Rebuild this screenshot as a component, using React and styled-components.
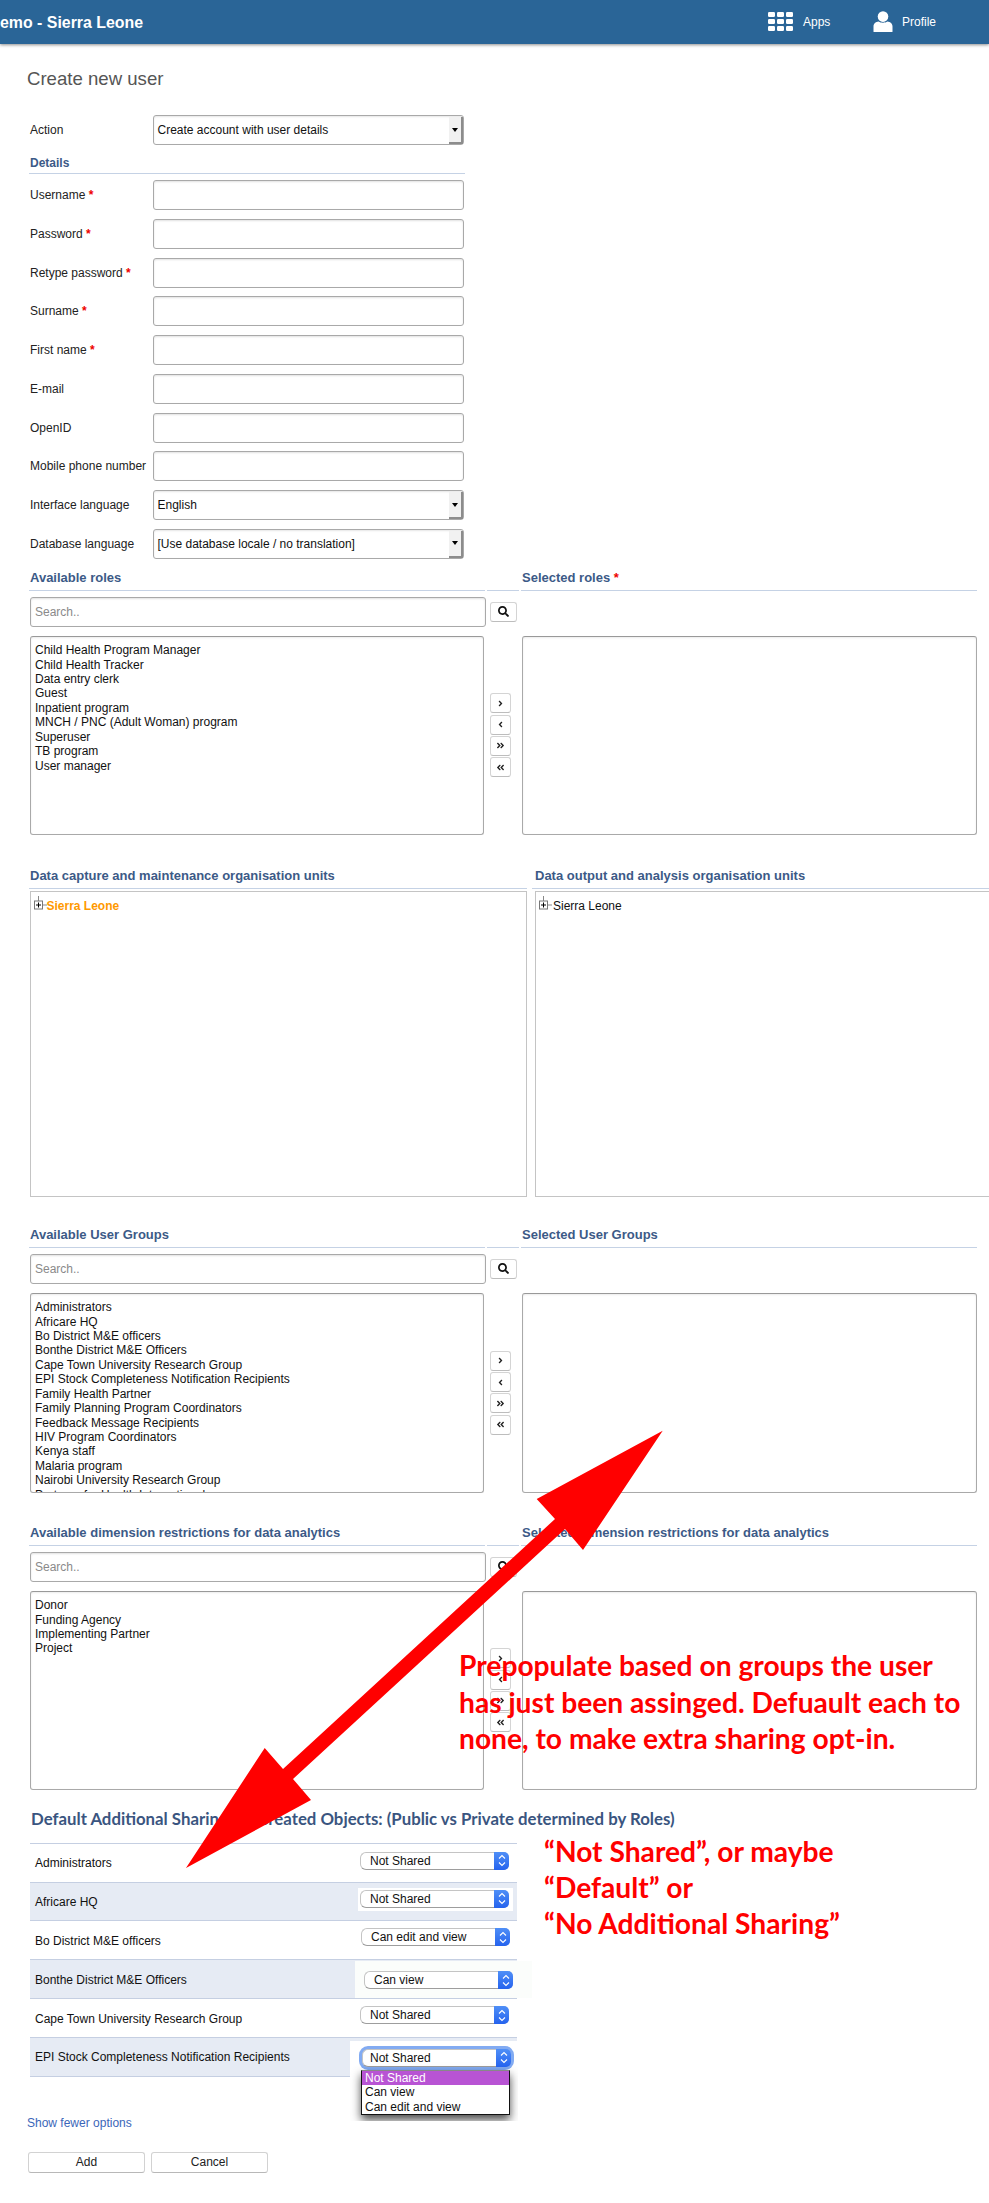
import React from "react";
import styled, { createGlobalStyle } from "styled-components";
import { FaSearch, FaAngleRight, FaAngleLeft, FaAngleDoubleRight, FaAngleDoubleLeft } from "react-icons/fa";

const Global = createGlobalStyle`
  * { box-sizing: border-box; }
  html, body { margin: 0; padding: 0; background: #fff; }
  body { font-family: "Liberation Sans", Arial, sans-serif; font-size: 12px; color: #222; }
`;

const Page = styled.div`
  position: relative;
  width: 989px;
  height: 2203px;
  overflow: hidden;
  background: #fff;
`;

const Header = styled.header`
  height: 44px;
  background: #2a6597;
  box-shadow: 0 1px 3px rgba(0, 0, 0, 0.45);
  display: flex;
  align-items: center;
  color: #fff;
`;
const Brand = styled.div`
  font-size: 15.9px;
  font-weight: 700;
  flex: 1;
  padding-top: 2px;
`;
const HeaderLink = styled.div`
  display: flex;
  align-items: center;
  gap: ${(p) => p.$gap}px;
  width: ${(p) => p.$width}px;
  font-size: 12px;
  padding-bottom: 1px;
`;

const Main = styled.main`
  padding-left: 29px;
`;
const Title = styled.h1`
  margin: 24px 0 0 -2px;
  height: 22px;
  font-size: 18.6px;
  line-height: 22px;
  font-weight: 400;
  color: #555;
`;
const Fields = styled.div`
  width: 436px;
  margin-top: 25px;
  display: flex;
  flex-direction: column;
`;
const FieldStack = styled.div`
  display: flex;
  flex-direction: column;
  gap: 8.75px;
  margin-top: 6px;
`;
const Field = styled.label`
  display: flex;
  align-items: center;
  height: 30px;
  padding-left: 1px;
`;
const FieldLabel = styled.span`
  width: 122.5px;
  flex: none;
  color: #222;
`;
const Star = styled.span`
  color: #e00;
  font-weight: 700;
`;
const TextInput = styled.input`
  width: ${(p) => p.$width || 311}px;
  height: 30px;
  border: 1px solid #a9a9a9;
  border-radius: 3px;
  background: #fff;
  box-shadow: inset 0 1px 2px rgba(0, 0, 0, 0.12);
  padding: 0 4px;
  font: 12px "Liberation Sans", Arial, sans-serif;
  flex: none;
  &::placeholder { color: #8a8a8a; opacity: 1; }
`;
const LegacySelect = styled.div`
  width: 311px;
  height: 30px;
  flex: none;
  display: flex;
  align-items: stretch;
  border: 1px solid #a9a9a9;
  border-radius: 3px;
  background: #fff;
  box-shadow: inset 0 1px 2px rgba(0, 0, 0, 0.1);
  color: #111;
`;
const LegacyValue = styled.span`
  flex: 1;
  padding-left: 4px;
  align-self: center;
`;
const LegacyArrow = styled.span`
  width: 14px;
  margin: 1px 0 0;
  background: #f1f1f1;
  border-right: 2px solid #8c8c8c;
  border-bottom: 2px solid #8c8c8c;
  display: flex;
  align-items: center;
  justify-content: center;
  &::after {
    content: "";
    border-left: 3px solid transparent;
    border-right: 3px solid transparent;
    border-top: 4px solid #000;
  }
`;
const SubHeading = styled.h3`
  margin: 11px 0 0 1px;
  height: 17px;
  font-size: 12px;
  line-height: 15px;
  font-weight: 700;
  color: #3c5a87;
`;
const Rule = styled.div`
  height: 1px;
  background: #c5d2e5;
`;

const Section = styled.section`
  margin-top: ${(p) => p.$top}px;
`;
const HeadRow = styled.div`
  display: grid;
  grid-template-columns: ${(p) => p.$cols};
  height: 24px;
  align-items: center;
  padding-left: 1px;
`;
const Heading = styled.h3`
  margin: 0;
  font-size: 13px;
  line-height: 16px;
  font-weight: 700;
  color: #3c5a87;
  white-space: nowrap;
`;
const RuleRow = styled.div`
  display: grid;
  grid-template-columns: ${(p) => p.$cols};
  gap: ${(p) => p.$gap}px;
`;
const SearchRow = styled.div`
  display: flex;
  align-items: center;
  gap: 4px;
  margin: 6px 0 9px 1px;
`;
const IconButton = styled.button`
  width: ${(p) => p.$width}px;
  height: 20px;
  padding: 0;
  border: 1px solid #d4d4d4;
  border-bottom-color: #bdbdbd;
  border-radius: 3px;
  background: #fff;
  display: flex;
  align-items: center;
  justify-content: center;
  color: #222;
`;
const ListsRow = styled.div`
  display: grid;
  grid-template-columns: 454px 38px 455px;
  margin-left: 1px;
  height: ${(p) => p.$height}px;
`;
const ListBox = styled.div`
  border: 1px solid #a9a9a9;
  border-top-color: #999;
  border-radius: 3px;
  padding: 6.5px 4px 0;
  overflow: hidden;
  line-height: 14.4px;
  color: #111;
  box-shadow: inset 0 1px 2px rgba(0, 0, 0, 0.08);
`;
const ListItem = styled.div`
  white-space: nowrap;
`;
const Mover = styled.div`
  display: flex;
  flex-direction: column;
  justify-content: center;
  gap: 1.4px;
  padding-left: 6px;
`;

const TreeRow = styled.div`
  display: grid;
  grid-template-columns: 497px 470px;
  gap: 8px;
  margin: 2px 0 0 1px;
  height: 306px;
`;
const TreeBox = styled.div`
  border: 1px solid #c4c4c4;
  padding: 7px 0 0 3px;
  display: flex;
  align-items: flex-start;
  color: ${(p) => (p.$active ? "#ff9900" : "#111")};
  font-weight: ${(p) => (p.$active ? 700 : 400)};
  line-height: 14px;
`;

const ShareHeading = styled.h3`
  margin: 18px 0 13px 2px;
  height: 22px;
  font-family: Lato, sans-serif;
  font-size: 16.8px;
  line-height: 22px;
  font-weight: 700;
  color: #3a5580;
  white-space: nowrap;
`;
const ShareTable = styled.div`
  width: 487px;
  margin-left: 1px;
  border-bottom: 1.5px solid #c5cfe2;
`;
const ShareRow = styled.div`
  height: 38.85px;
  border-top: 1.5px solid #c5cfe2;
  background: ${(p) => (p.$shaded ? "#e6ebf4" : "#fff")};
  display: flex;
  justify-content: space-between;
  align-items: flex-start;
`;
const ShareLabel = styled.span`
  padding: 12.5px 0 0 5px;
  color: #111;
  line-height: 14px;
`;
const Slot = styled.div`
  position: relative;
  z-index: 1;
  margin-top: ${(p) => p.$top}px;
  margin-right: ${(p) => p.$right}px;
  padding: ${(p) => p.$pad};
  height: ${(p) => p.$height || "auto"};
  background: ${(p) => p.$bg};
  overflow: hidden;
`;
const MacSelect = styled.div`
  width: 149px;
  height: 18px;
  display: flex;
  border: 1px solid #c4c4c4;
  border-bottom-color: #9d9d9d;
  border-right: none;
  border-radius: 6px;
  background: #fff;
  line-height: 17px;
  color: #111;
  box-shadow: ${(p) => (p.$focus ? "0 0 0 3px #82abf2" : "none")};
`;
const MacValue = styled.span`
  flex: 1;
  padding-left: ${(p) => (p.$focus ? 7 : 9)}px;
`;
const MacStepper = styled.span`
  width: 15px;
  margin: -1px 0;
  border-radius: 0 5px 5px 0;
  background: linear-gradient(#4f8ff7, #2563ee);
  display: flex;
  align-items: center;
  justify-content: center;
`;
const Dropdown = styled.div`
  width: 149px;
  margin: 3px 0 0 -1px;
  background: #fff;
  border: 1px solid #111;
  border-top-color: #888;
  box-shadow: 0 5px 9px rgba(0, 0, 0, 0.7);
  line-height: 14.4px;
  color: #111;
`;
const DropdownItem = styled.div`
  padding-left: 3px;
  background: ${(p) => (p.$selected ? "#b854d4" : "#fff")};
  color: ${(p) => (p.$selected ? "#fff" : "#111")};
`;

const MoreLink = styled.a`
  display: block;
  margin: 39px 0 0 -2px;
  color: #3b66b9;
  line-height: 14px;
`;
const Actions = styled.div`
  display: flex;
  gap: 6px;
  margin-top: 22px;
  margin-left: -1px;
`;
const ActionButton = styled.button`
  width: 117px;
  height: 21px;
  padding: 0;
  border: 1px solid #d2d2d2;
  border-bottom-color: #b8b8b8;
  border-radius: 3px;
  background: #fff;
  font: 12px "Liberation Sans", Arial, sans-serif;
  color: #222;
`;

const ArrowOverlay = styled.svg`
  position: absolute;
  left: 0;
  top: 0;
  width: 989px;
  height: 2203px;
  pointer-events: none;
`;
const Note = styled.div`
  position: absolute;
  left: ${(p) => p.$left}px;
  top: ${(p) => p.$y}px;
  font-family: Lato, sans-serif;
  font-weight: 700;
  font-size: ${(p) => p.$size}px;
  line-height: ${(p) => p.$line}px;
  color: #f00;
  white-space: nowrap;
`;
const TreeGlyph = styled.svg`
  flex: none;
  margin-top: -3px;
`;

const AppsIcon = () => (
  <svg width="25" height="19" viewBox="0 0 25 19" fill="#fff">
    {[0, 7, 14].map((y) =>
      [0, 9, 18].map((x) => <rect key={`${x}-${y}`} x={x} y={y} width="7" height="5" rx="1.2" />)
    )}
  </svg>
);
const ProfileIcon = () => (
  <svg width="20" height="21" viewBox="0 0 20 21" fill="#fff">
    <circle cx="10" cy="5.6" r="5.3" />
    <path d="M0.5 20.5 V15.5 C0.5 12.5 3 10.8 5.5 10.6 C8 12.2 12 12.2 14.5 10.6 C17 10.8 19.5 12.5 19.5 15.5 V20.5 Q19.5 21 19 21 H1 Q0.5 21 0.5 20.5 Z" />
  </svg>
);
const StepperIcon = () => (
  <svg width="8" height="13" viewBox="0 0 8 13" fill="none" stroke="#fff" strokeWidth="1.1">
    <path d="M1 4.5 L4 1.5 L7 4.5" />
    <path d="M1 8.5 L4 11.5 L7 8.5" />
  </svg>
);
const TreePlus = ({ width }) => (
  <TreeGlyph width={width} height="14" viewBox={`0 0 ${width} 14`}>
    <path d="M4.5 0 V5" stroke="#888" fill="none" />
    <rect x="0.5" y="5" width="8" height="8" fill="#fff" stroke="#777" />
    <path d="M2 9 H7 M4.5 6.5 V11.5" stroke="#000" fill="none" />
    <path d="M9 9 H13" stroke="#888" fill="none" />
  </TreeGlyph>
);

const SCOLS = "456px 32px 456px";
const RULE = (
  <RuleRow $cols={SCOLS} $gap={2}>
    <Rule />
    <Rule />
    <Rule />
  </RuleRow>
);

const Picker = ({ top, left, right, leftStar, items, height }) => (
  <Section $top={top}>
    <HeadRow $cols="492px 1fr">
      <Heading>{left}</Heading>
      <Heading>
        {right}
        {leftStar && <Star> *</Star>}
      </Heading>
    </HeadRow>
    {RULE}
    <SearchRow>
      <TextInput $width={456} placeholder="Search.." />
      <IconButton $width={27}>
        <FaSearch size={11} color="#111" />
      </IconButton>
    </SearchRow>
    <ListsRow $height={height}>
      <ListBox>
        {items.map((t) => (
          <ListItem key={t}>{t}</ListItem>
        ))}
      </ListBox>
      <Mover>
        <IconButton $width={21}><FaAngleRight size={9} /></IconButton>
        <IconButton $width={21}><FaAngleLeft size={9} /></IconButton>
        <IconButton $width={21}><FaAngleDoubleRight size={9} /></IconButton>
        <IconButton $width={21}><FaAngleDoubleLeft size={9} /></IconButton>
      </Mover>
      <ListBox />
    </ListsRow>
  </Section>
);

const Mac = ({ value, focus }) => (
  <MacSelect $focus={focus}>
    <MacValue $focus={focus}>{value}</MacValue>
    <MacStepper><StepperIcon /></MacStepper>
  </MacSelect>
);

const ROLES = ["Child Health Program Manager", "Child Health Tracker", "Data entry clerk", "Guest", "Inpatient program", "MNCH / PNC (Adult Woman) program", "Superuser", "TB program", "User manager"];
const GROUPS = ["Administrators", "Africare HQ", "Bo District M&E officers", "Bonthe District M&E Officers", "Cape Town University Research Group", "EPI Stock Completeness Notification Recipients", "Family Health Partner", "Family Planning Program Coordinators", "Feedback Message Recipients", "HIV Program Coordinators", "Kenya staff", "Malaria program", "Nairobi University Research Group", "Partners for Health International"];
const DIMS = ["Donor", "Funding Agency", "Implementing Partner", "Project"];
const FIELDS = [["Username", true], ["Password", true], ["Retype password", true], ["Surname", true], ["First name", true], ["E-mail"], ["OpenID"], ["Mobile phone number"]];

export default function App() {
  return (
    <Page>
      <Global />
      <Header>
        <Brand>emo - Sierra Leone</Brand>
        <HeaderLink $gap={10} $width={105}><AppsIcon />Apps</HeaderLink>
        <HeaderLink $gap={9} $width={116}><ProfileIcon />Profile</HeaderLink>
      </Header>
      <Main>
        <Title>Create new user</Title>
        <Fields>
          <Field>
            <FieldLabel>Action</FieldLabel>
            <LegacySelect>
              <LegacyValue>Create account with user details</LegacyValue>
              <LegacyArrow />
            </LegacySelect>
          </Field>
          <SubHeading>Details</SubHeading>
          <Rule />
          <FieldStack>
            {FIELDS.map(([name, req]) => (
              <Field key={name}>
                <FieldLabel>{name}{req && <Star> *</Star>}</FieldLabel>
                <TextInput />
              </Field>
            ))}
            <Field>
              <FieldLabel>Interface language</FieldLabel>
              <LegacySelect>
                <LegacyValue>English</LegacyValue>
                <LegacyArrow />
              </LegacySelect>
            </Field>
            <Field>
              <FieldLabel>Database language</FieldLabel>
              <LegacySelect>
                <LegacyValue>[Use database locale / no translation]</LegacyValue>
                <LegacyArrow />
              </LegacySelect>
            </Field>
          </FieldStack>
        </Fields>

        <Picker top={7} left="Available roles" right="Selected roles" leftStar items={ROLES} height={199} />

        <Section $top={29}>
          <HeadRow $cols="505px 1fr">
            <Heading>Data capture and maintenance organisation units</Heading>
            <Heading>Data output and analysis organisation units</Heading>
          </HeadRow>
          <RuleRow $cols="498px 460px" $gap={5}>
            <Rule />
            <Rule />
          </RuleRow>
          <TreeRow>
            <TreeBox $active><TreePlus width={12.5} />Sierra Leone</TreeBox>
            <TreeBox><TreePlus width={14} />Sierra Leone</TreeBox>
          </TreeRow>
        </Section>

        <Picker top={26} left="Available User Groups" right="Selected User Groups" items={GROUPS} height={200} />
        <Picker top={28} left="Available dimension restrictions for data analytics" right="Selected dimension restrictions for data analytics" items={DIMS} height={199} />

        <ShareHeading>Default Additional Sharing for Created Objects: (Public vs Private determined by Roles)</ShareHeading>
        <ShareTable>
          <ShareRow>
            <ShareLabel>Administrators</ShareLabel>
            <Slot $top={8} $right={8} $pad="0" $bg="transparent"><Mac value="Not Shared" /></Slot>
          </ShareRow>
          <ShareRow $shaded>
            <ShareLabel>Africare HQ</ShareLabel>
            <Slot $top={5} $right={4} $pad="2px 4px 3px 2px" $bg="#fff"><Mac value="Not Shared" /></Slot>
          </ShareRow>
          <ShareRow>
            <ShareLabel>Bo District M&amp;E officers</ShareLabel>
            <Slot $top={7} $right={7} $pad="0" $bg="transparent"><Mac value="Can edit and view" /></Slot>
          </ShareRow>
          <ShareRow $shaded>
            <ShareLabel>Bonthe District M&amp;E Officers</ShareLabel>
            <Slot $top={1} $right={-15} $pad="10px 19px 9px 9px" $bg="#fbfdfb"><Mac value="Can view" /></Slot>
          </ShareRow>
          <ShareRow>
            <ShareLabel>Cape Town University Research Group</ShareLabel>
            <Slot $top={7} $right={8} $pad="0" $bg="transparent"><Mac value="Not Shared" /></Slot>
          </ShareRow>
          <ShareRow $shaded>
            <ShareLabel>EPI Stock Completeness Notification Recipients</ShareLabel>
            <Slot $top={3} $right={-1} $pad="8px 7px 0 12px" $height="80px" $bg="#fff">
              <Mac value="Not Shared" focus />
              <Dropdown>
                <DropdownItem $selected>Not Shared</DropdownItem>
                <DropdownItem>Can view</DropdownItem>
                <DropdownItem>Can edit and view</DropdownItem>
              </Dropdown>
            </Slot>
          </ShareRow>
        </ShareTable>
        <MoreLink>Show fewer options</MoreLink>
        <Actions>
          <ActionButton>Add</ActionButton>
          <ActionButton>Cancel</ActionButton>
        </Actions>
      </Main>

      <ArrowOverlay viewBox="0 0 989 2203">
        <polygon
          fill="#f00"
          points="662.7,1430.7 536.7,1499 555,1519 283,1769 264.7,1748 186,1868 311,1800 293,1779 565,1529 583,1550"
        />
      </ArrowOverlay>
      <Note $left={459} $y={1647} $size={28.2} $line={36.5}>
        Prepopulate based on groups the user<br />
        has just been assinged. Defuault each to<br />
        none, to make extra sharing opt-in.
      </Note>
      <Note $left={544} $y={1833} $size={28.2} $line={36}>
        “Not Shared”, or maybe<br />
        “Default” or<br />
        “No Additional Sharing”
      </Note>
    </Page>
  );
}
